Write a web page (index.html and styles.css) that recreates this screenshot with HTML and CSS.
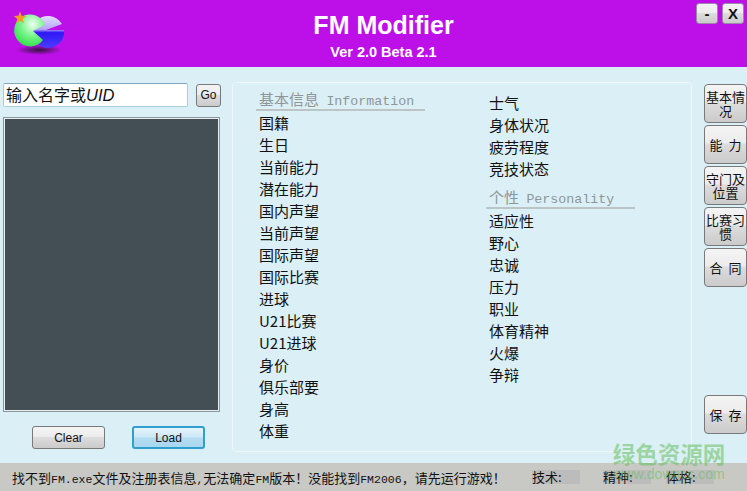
FILE: index.html
```html
<!DOCTYPE html>
<html lang="zh-CN">
<head>
    <meta charset="UTF-8">
    <meta name="viewport" content="width=device-width, initial-scale=1.0">
    <title>FM Modifier</title>
    <link rel="stylesheet" href="styles.css">
</head>
<body>

    <header class="topbar">
        <svg class="logo" width="52" height="56" viewBox="0 0 52 56">
            <defs>
                <radialGradient id="gGreen" cx="0.6" cy="0.3" r="0.8">
                    <stop offset="0" stop-color="#f2fff2"/>
                    <stop offset="0.45" stop-color="#7df58f"/>
                    <stop offset="1" stop-color="#22dd3c"/>
                </radialGradient>
                <linearGradient id="gBlue" x1="0" y1="0" x2="0" y2="1">
                    <stop offset="0" stop-color="#e4dcff"/>
                    <stop offset="0.42" stop-color="#b3a6f6"/>
                    <stop offset="0.52" stop-color="#2f18f5"/>
                    <stop offset="1" stop-color="#4a3cff"/>
                </linearGradient>
                <radialGradient id="gShadow">
                    <stop offset="0" stop-color="#34143f"/>
                    <stop offset="1" stop-color="#34143f" stop-opacity="0"/>
                </radialGradient>
            </defs>
            <ellipse cx="26" cy="38" rx="23" ry="5" fill="url(#gShadow)"/>
            <path d="M49 12 A16 16 0 1 0 51 18 L33 18 Z" fill="url(#gBlue)"/>
            <path d="M32 12.500 A16 16 0 1 0 30 28 L20 19 Z" fill="url(#gGreen)"/>
            <polygon points="7,-0.500 8.600,3.700 13.200,4 9.700,6.900 10.800,11.300 7,8.800 3.200,11.300 4.300,6.900 0.800,4 5.400,3.700" fill="#f59a23"/>
        </svg>
        <div class="title">
            <h1>FM Modifier</h1>
            <p>Ver 2.0 Beta 2.1</p>
        </div>
        <div class="win-btns">
            <button class="btn win-btn">-</button>
            <button class="btn win-btn">X</button>
        </div>
    </header>

    <main class="main">
        <section class="left">
            <div class="search">
                <div class="search-input">输入名字或<i>UID</i></div>
                <button class="btn go">Go</button>
            </div>
            <div class="list"></div>
            <div class="actions">
                <button class="btn act">Clear</button>
                <button class="btn act load">Load</button>
            </div>
        </section>

        <section class="panel">
            <div class="col col-a">
                <h2>基本信息 <span class="en">Information</span></h2>
                <div class="row">国籍</div>
                <div class="row">生日</div>
                <div class="row">当前能力</div>
                <div class="row">潜在能力</div>
                <div class="row">国内声望</div>
                <div class="row">当前声望</div>
                <div class="row">国际声望</div>
                <div class="row">国际比赛</div>
                <div class="row">进球</div>
                <div class="row">U21比赛</div>
                <div class="row">U21进球</div>
                <div class="row">身价</div>
                <div class="row">俱乐部要</div>
                <div class="row">身高</div>
                <div class="row">体重</div>
            </div>
            <div class="col col-b">
                <div class="row">士气</div>
                <div class="row">身体状况</div>
                <div class="row">疲劳程度</div>
                <div class="row">竞技状态</div>
                <h2>个性 <span class="en">Personality</span></h2>
                <div class="row">适应性</div>
                <div class="row">野心</div>
                <div class="row">忠诚</div>
                <div class="row">压力</div>
                <div class="row">职业</div>
                <div class="row">体育精神</div>
                <div class="row">火爆</div>
                <div class="row">争辩</div>
            </div>
        </section>

        <nav class="side">
            <button class="btn tab">基本情况</button>
            <button class="btn tab">能&nbsp;&nbsp;力</button>
            <button class="btn tab">守门及位置</button>
            <button class="btn tab">比赛习惯</button>
            <button class="btn tab">合&nbsp;&nbsp;同</button>
            <button class="btn tab save">保&nbsp;&nbsp;存</button>
        </nav>
    </main>

    <footer class="status">
        <div class="msg">找不到<span class="en">FM.exe</span>文件及注册表信息<span class="en">,</span>无法确定<span class="en">FM</span>版本！没能找到<span class="en">FM2006</span>，请先运行游戏！</div>
        <div class="stat">技术:</div>
        <div class="stat">精神:</div>
        <div class="stat">体格:</div>
    </footer>

    <div class="watermark">
        <div class="wm-cn">绿色资源网</div>
        <div class="wm-en">www.downcc.com</div>
    </div>

</body>
</html>
```

FILE: styles.css
```css
/* layout */
html, body {
    margin: 0;
    padding: 0;
}
body {
    width: 747px;
    height: 491px;
    overflow: hidden;
    position: relative;
    display: flex;
    flex-direction: column;
    background-color: #dbeff7;
    font-family: "Noto Sans CJK SC", "Liberation Sans", sans-serif;
    font-size: 15px;
    color: #111;
}
.en {
    font-family: "Liberation Mono", monospace;
}

/* top bar */
.topbar {
    height: 67px;
    flex: none;
    display: flex;
    align-items: flex-start;
    padding: 3px 3px 0 13px;
    box-sizing: border-box;
    background-color: #bd10e8;
}
.logo {
    margin-top: 9px;
    flex: none;
    overflow: visible;
}
.title {
    flex: 1;
    padding-left: 6px;
    text-align: center;
    color: #fff;
    font-family: "Liberation Sans", sans-serif;
    font-weight: bold;
}
.title h1 {
    margin: 8px 0 0;
    font-size: 25px;
    line-height: 29px;
}
.title p {
    margin: 4px 0 0;
    font-size: 14.5px;
    line-height: 17px;
}
.win-btns {
    display: flex;
    gap: 4px;
}

/* buttons */
.btn {
    display: block;
    margin: 0;
    padding: 0;
    border: 1px solid #77797b;
    border-radius: 3px;
    background: linear-gradient(#f4f4f4 0%, #ececec 45%, #dcdcdc 50%, #cbcbcb 100%);
    color: #111;
    font-family: "Liberation Sans", sans-serif;
    font-size: 12px;
}
.win-btn {
    width: 22px;
    height: 21px;
    font-size: 15px;
    font-weight: bold;
    border-color: #9a8aa8;
}

/* left side */
.main {
    flex: 1;
    display: flex;
    align-items: flex-start;
    min-height: 0;
}
.left {
    width: 218px;
    margin: 16px 0 0 3px;
    flex: none;
}
.search {
    display: flex;
    align-items: center;
    gap: 8px;
}
.search-input {
    width: 185px;
    height: 24px;
    box-sizing: border-box;
    padding-left: 2px;
    background-color: #fff;
    border: 1px solid #a9cfdc;
    border-top-color: #7fa9bb;
    border-radius: 2px;
    font-size: 16px;
    line-height: 20px;
    white-space: nowrap;
}
.search-input i {
    font-family: "Liberation Sans", sans-serif;
    font-size: 16.5px;
}
.go {
    width: 25px;
    height: 23px;
}
.list {
    width: 217px;
    height: 295px;
    box-sizing: border-box;
    margin-top: 10px;
    background-color: #434f55;
    border: 1px solid #8c979c;
    box-shadow: inset 0 0 0 1px #e8eef0;
}
.actions {
    display: flex;
    gap: 27px;
    margin: 14px 0 0 29px;
}
.act {
    width: 73px;
    height: 23px;
}
.load {
    border: 2px solid #2f9fd0;
    background: linear-gradient(#e6f5fc 0%, #cde8f6 45%, #b4dcf2 55%, #a9d6ef 100%);
}

/* middle panel */
.panel {
    width: 460px;
    height: 370px;
    box-sizing: border-box;
    margin: 15px 0 0 11px;
    flex: none;
    display: flex;
    gap: 61px;
    padding-left: 23px;
    border: 1px solid #eef7fa;
    border-radius: 4px;
}
.col-a {
    width: 169px;
    padding-top: 6px;
}
.col-b {
    width: 149px;
    padding-top: 9px;
}
.col h2 {
    margin: 0 0 1px;
    padding-left: 3px;
    height: 22px;
    box-sizing: border-box;
    border-bottom: 2px solid #bcc4c6;
    color: #8f9698;
    font-size: 15px;
    font-weight: normal;
    line-height: 20px;
    white-space: nowrap;
}
.col-b h2 {
    margin-top: 7px;
}
.col h2 .en {
    margin-left: 4px;
    font-size: 13.3px;
}
.row {
    height: 22px;
    padding-left: 3px;
    line-height: 21px;
    white-space: nowrap;
}

/* right side buttons */
.side {
    width: 43px;
    margin: 17px 0 0 12px;
    flex: none;
    display: flex;
    flex-direction: column;
    gap: 2px;
}
.tab {
    width: 43px;
    height: 39px;
    font-family: "Noto Sans CJK SC", sans-serif;
    font-size: 13px;
    line-height: 14px;
    border-radius: 4px;
}
.save {
    margin-top: 106px;
}

/* status bar */
.status {
    height: 28px;
    flex: none;
    display: flex;
    align-items: center;
    box-sizing: border-box;
    padding-left: 12px;
    background-color: #c8c8c4;
    font-size: 13px;
    white-space: nowrap;
}
.msg {
    width: 520px;
}
.msg .en {
    font-size: 11.5px;
}
.stat {
    width: 48px;
    height: 14px;
    margin-right: 23px;
    font-size: 13px;
    line-height: 14px;
    background-color: #bcbcbc;
}
.stat:last-child {
    margin-left: -8px;
}

/* watermark over the page */
.watermark {
    position: absolute;
    left: 612px;
    top: 440px;
    width: 114px;
    text-align: center;
    color: rgba(100, 190, 90, 0.55);
    pointer-events: none;
}
.wm-cn {
    font-size: 22.5px;
    font-weight: bold;
    line-height: 26px;
    white-space: nowrap;
}
.wm-en {
    margin-top: 1px;
    font-family: "Liberation Sans", sans-serif;
    font-size: 14px;
    line-height: 14px;
    white-space: nowrap;
}
```
